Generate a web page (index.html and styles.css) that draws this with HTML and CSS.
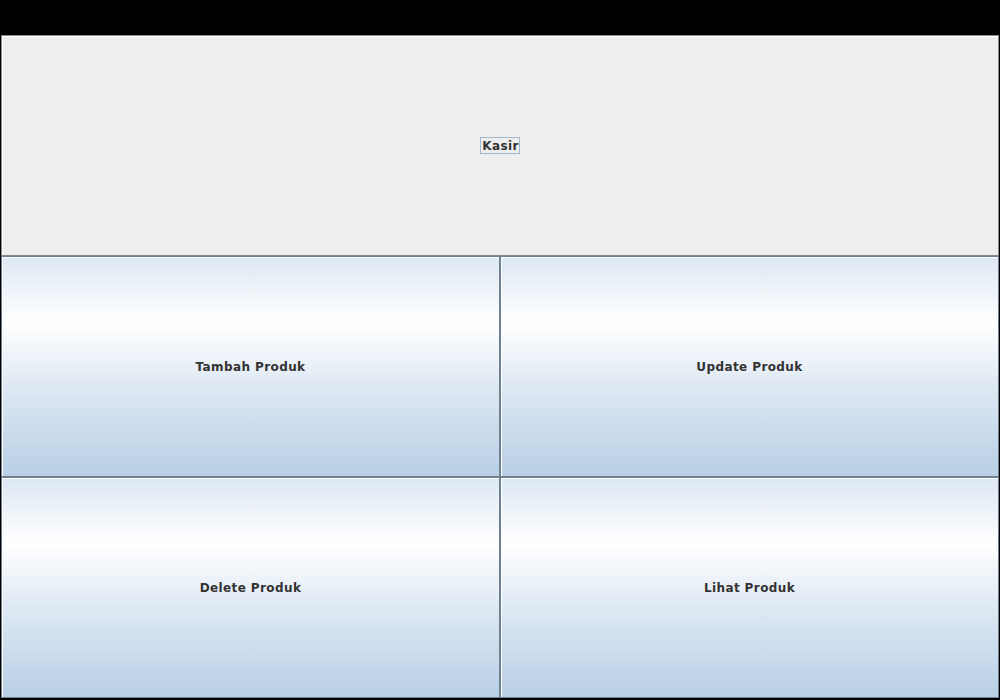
FILE: index.html
```html
<!DOCTYPE html>
<html lang="en">
<head>
    <meta charset="UTF-8">
    <title>Kasir</title>
    <link rel="stylesheet" href="styles.css">
</head>
<body>
    <div class="window">
        <!-- Top wide button -->
        <button class="btn btn-flat"><span class="focus">Kasir</span></button>

        <!-- Product menu -->
        <div class="menu-grid">
            <button class="btn">Tambah Produk</button>
            <button class="btn">Update Produk</button>
            <button class="btn">Delete Produk</button>
            <button class="btn">Lihat Produk</button>
        </div>
    </div>
</body>
</html>
```

FILE: styles.css
```css
* {
    margin: 0;
    padding: 0;
    box-sizing: border-box;
}

body {
    background: #000;
    width: 1000px;
    height: 700px;
    overflow: hidden;
    padding: 35px 1px 0 1px;
}

.window {
    width: 998px;
    display: flex;
    flex-direction: column;
}

/* Metal / Ocean style button */
.btn {
    height: 221px;
    border: 1px solid #6f8091;
    box-shadow: inset 1px 1px 0 #ffffff;
    background: linear-gradient(to bottom, #dde8f3 0%, #ffffff 30%, #dde8f3 60%, #b8cfe5 100%);
    color: #333333;
    font-family: "DejaVu Sans", sans-serif;
    font-weight: bold;
    font-size: 12px;
    letter-spacing: 0.4px;
    display: flex;
    align-items: center;
    justify-content: center;
}

.btn-flat {
    background: #eeeeee;
    border-color: #8a8a8a;
}

.focus {
    border: 1px solid #a3b8cc;
    padding: 1px 0 0 1px;
}

.menu-grid {
    display: grid;
    grid-template-columns: 499px 499px;
    grid-auto-rows: 221px;
}
```
